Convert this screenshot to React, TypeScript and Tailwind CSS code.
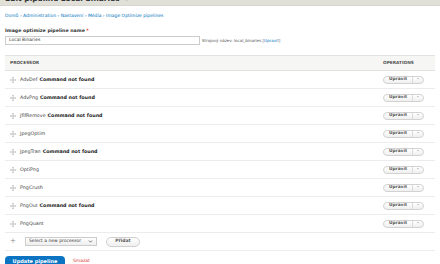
import { ChevronDown } from 'lucide-react';

const rows = [
  { name: 'AdvDef', missing: true },
  { name: 'AdvPng', missing: true },
  { name: 'JfifRemove', missing: true },
  { name: 'JpegOptim', missing: false },
  { name: 'JpegTran', missing: true },
  { name: 'OptiPng', missing: false },
  { name: 'PngCrush', missing: false },
  { name: 'PngOut', missing: true },
  { name: 'PngQuant', missing: false },
];

function DragHandle() {
  return (
    <svg width="6" height="6" viewBox="0 0 12 12" className="shrink-0 text-[#aaa]">
      <path d="M6 0.5 V11.5 M0.5 6 H11.5" stroke="currentColor" strokeWidth="1.3" fill="none" />
      <path d="M6 0 L4.3 2.2 H7.7 Z M6 12 L4.3 9.8 H7.7 Z M0 6 L2.2 4.3 V7.7 Z M12 6 L9.8 4.3 V7.7 Z" fill="currentColor" />
    </svg>
  );
}

function OpsButton() {
  return (
    <div className="flex h-[8px] w-[41px] items-stretch rounded-full border border-[#d2d2d2] bg-gradient-to-b from-white to-[#efefef] text-[4.3px] font-semibold text-[#555]">
      <span className="flex w-[29px] items-center justify-center border-r border-[#dadada] leading-none">Upravit</span>
      <span className="flex flex-1 items-center justify-center leading-none text-[#777]">-</span>
    </div>
  );
}

export default function App() {
  return (
    <div className="w-[440px] h-[264px] overflow-hidden bg-white font-['DejaVu_Sans',sans-serif] text-[#333]">
      {/* Page title band, cut off at the top */}
      <div className="h-[6px] overflow-hidden border-b border-[#d6d6ce] bg-[#e0e0d8] px-[5px]">
        <div className="-mt-[6px] flex items-center gap-[4px] text-[7.5px] font-bold leading-[10px] text-[#333]">
          <span>Edit pipeline Local binaries</span>
          <span className="text-[6px] text-[#aaa]">☆</span>
        </div>
      </div>

      <div className="px-[5px]">
        {/* Breadcrumb */}
        <div className="mt-[7px] flex h-[6px] items-center text-[4.5px] text-[#0074bd]">
          Domů › Administration › Nastavení › Média › Image Optimize pipelines
        </div>

        {/* Name field */}
        <div className="mt-[9px] flex h-[6px] items-center text-[4.7px] font-bold text-[#333]">
          Image optimize pipeline name <span className="ml-[1.5px] text-[#e33]">*</span>
        </div>
        <div className="mt-[2px] flex items-center">
          <div className="flex h-[9px] w-[195px] items-center border border-[#ccc] px-[3px] text-[4.5px] text-[#333]">
            Local Binaries
          </div>
          <span className="ml-[2px] text-[4px] text-[#555]">
            Strojový název: local_binaries [<span className="text-[#0074bd]">Upravit</span>]
          </span>
        </div>

        {/* Processor table */}
        <div className="mt-[10px] w-[430px] border-t border-[#e2e2e2]">
          <div className="flex h-[15px] items-center border-b border-[#e2e2e2] bg-[#f6f6f4] px-[5px] text-[4.3px] font-bold uppercase text-[#555]">
            <span className="flex-1">Processor</span>
            <span className="w-[47px]">Operations</span>
          </div>
          {rows.map((r) => (
            <div key={r.name} className="flex h-[18px] items-center border-b border-[#ececec] pl-[5px]">
              <DragHandle />
              <span className="ml-[4px] flex-1 text-[4.8px] text-[#444]">
                {r.name}
                {r.missing && <b className="ml-[2px] text-[#222]">Command not found</b>}
              </span>
              <div className="w-[52px]">
                <OpsButton />
              </div>
            </div>
          ))}
          <div className="flex h-[18px] items-center border-b border-[#ececec] pl-[5px]">
            <span className="w-[10px] text-[7px] leading-none text-[#888]">+</span>
            <div className="ml-[5px] flex h-[9px] w-[72px] items-center justify-between border border-[#ccc] bg-gradient-to-b from-white to-[#eee] px-[3px] text-[4.5px] text-[#333]">
              <span>Select a new processor</span>
              <ChevronDown size={5} strokeWidth={4} className="text-[#555]" />
            </div>
            <div className="ml-[9px] flex h-[10px] w-[34px] items-center justify-center rounded-full border border-[#d0d0d0] bg-gradient-to-b from-white to-[#efefef] text-[4.5px] font-bold text-[#555]">
              Přidat
            </div>
          </div>
        </div>

        {/* Actions */}
        <div className="mt-[5px] flex items-start">
          <div className="flex h-[12px] w-[60px] items-center justify-center rounded-[4px] bg-[#0a74c3] text-[5px] font-bold text-white">
            Update pipeline
          </div>
          <span className="ml-[8px] mt-[3px] text-[4.5px] leading-none text-[#d33]">Smazat</span>
        </div>
      </div>
    </div>
  );
}
